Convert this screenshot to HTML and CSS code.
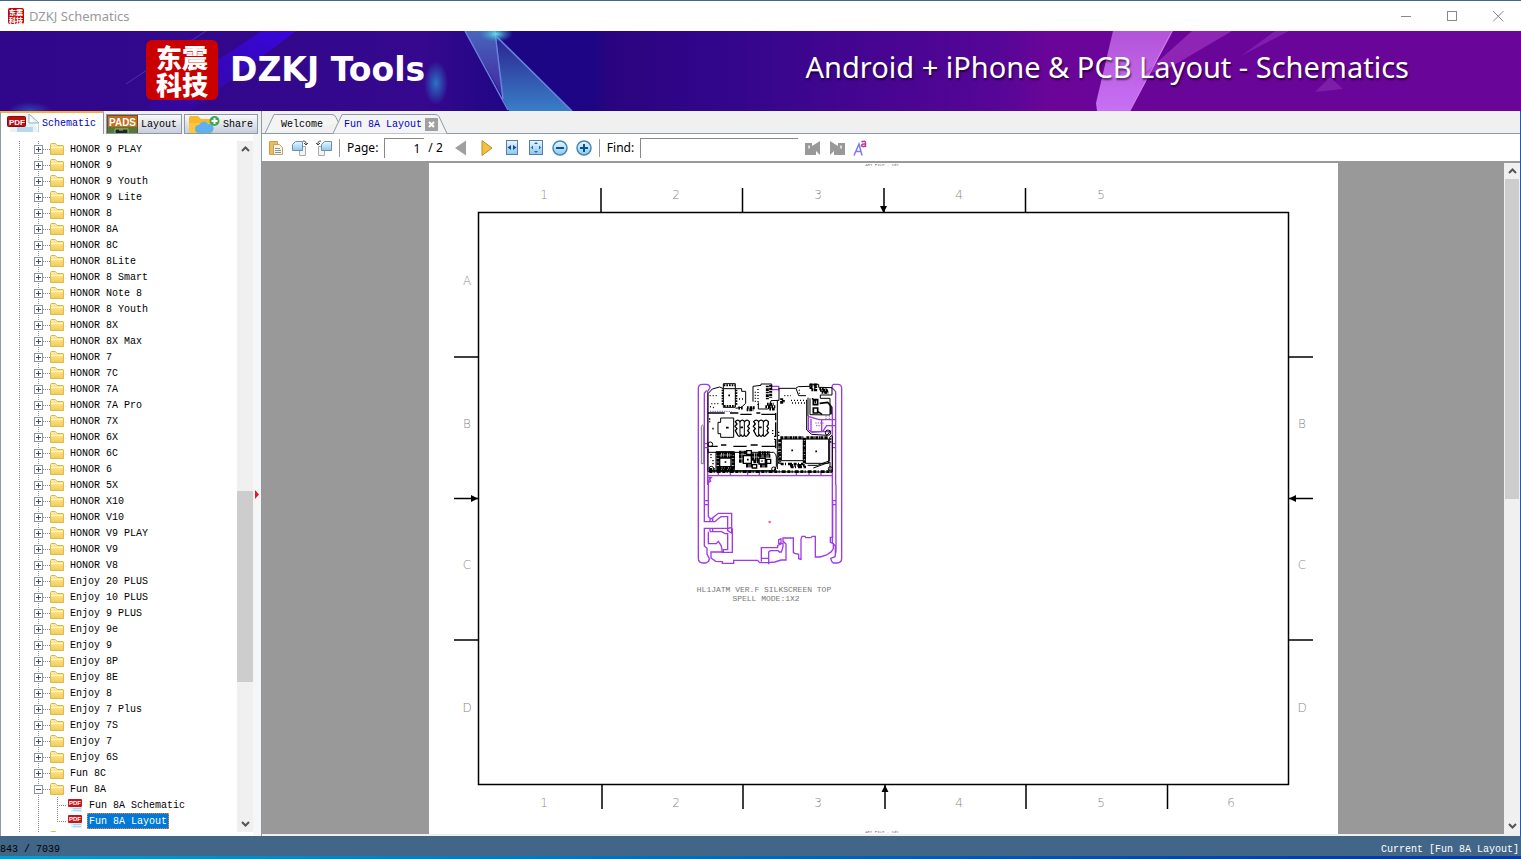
FILE: index.html
```html
<!DOCTYPE html>
<html lang="en">
<head>
    <meta charset="UTF-8">
    <meta name="viewport" content="width=device-width, initial-scale=1.0">
    <title>DZKJ Schematics</title>
    <link rel="stylesheet" href="styles.css">
</head>
<body>
    <!-- shared icons -->
    <svg class="sprite" aria-hidden="true">
        <defs>
            <linearGradient id="gold" x1="0" y1="0" x2="0" y2="1">
                <stop offset="0" stop-color="#fff0a8"/>
                <stop offset="1" stop-color="#f2cb55"/>
            </linearGradient>
            <linearGradient id="blue" x1="0" y1="0" x2="0" y2="1">
                <stop offset="0" stop-color="#e8f6ff"/>
                <stop offset="1" stop-color="#8cc8f0"/>
            </linearGradient>
        </defs>
        <symbol id="folder" viewBox="0 0 14 12">
            <path d="M.5 1.500q0-1 1-1h4l1.500 2h6q.5 0 .5.5v8.500H.5z" fill="url(#gold)" stroke="#dfb84e"/>
            <path d="M1 4.500h12" stroke="#fff6c4"/>
        </symbol>
        <symbol id="pdf" viewBox="0 0 16 15">
            <path d="M4 1h8l3 4v9H4z" fill="#dff0fb"/>
            <path d="M6 10.500h8M6 12.500h8" stroke="#a9d3ee"/>
            <rect x="1" y="1" width="14" height="8" rx="1" fill="#c4161c"/>
            <text x="2" y="7" class="tiny">PDF</text>
        </symbol>
        <symbol id="up" viewBox="0 0 9 6">
            <path d="M1 5l3.500-3.500L8 5" fill="none" stroke="#555" stroke-width="2"/>
        </symbol>
        <symbol id="down" viewBox="0 0 9 6">
            <path d="M1 1l3.500 3.500L8 1" fill="none" stroke="#555" stroke-width="2"/>
        </symbol>
    </svg>

    <header class="titlebar">
        <span class="seal small" aria-hidden="true"><b>东震</b><b>科技</b></span>
        <span class="title">DZKJ Schematics</span>
        <div class="window-buttons">
            <button aria-label="Minimize"><svg width="11" height="11"><path d="M0 5.500h10" stroke="#888"/></svg></button>
            <button aria-label="Maximize"><svg width="11" height="11"><rect x=".5" y=".5" width="9" height="9" fill="none" stroke="#888"/></svg></button>
            <button aria-label="Close"><svg width="11" height="11"><path d="M0 0l10.500 10.500M10.500 0L0 10.500" stroke="#888"/></svg></button>
        </div>
    </header>

    <div class="banner">
        <svg class="banner-art" viewBox="0 0 1521 80" preserveAspectRatio="none" aria-hidden="true">
            <defs>
                <linearGradient id="night">
                    <stop offset="0" stop-color="#30078a"/>
                    <stop offset=".28" stop-color="#35088e"/>
                    <stop offset=".34" stop-color="#1c0684"/>
                    <stop offset=".39" stop-color="#1d0585"/>
                    <stop offset=".4" stop-color="#2a047f"/>
                    <stop offset=".48" stop-color="#33068c"/>
                    <stop offset=".6" stop-color="#4b0593"/>
                    <stop offset=".66" stop-color="#570697"/>
                    <stop offset=".69" stop-color="#6b0599"/>
                    <stop offset="1" stop-color="#690599"/>
                </linearGradient>
                <linearGradient id="shard" x1="0" y1="0" x2="0" y2="1">
                    <stop offset="0" stop-color="#2b2290"/>
                    <stop offset="1" stop-color="#397fc6"/>
                </linearGradient>
                <linearGradient id="shard2" x1="0" y1="0" x2="0" y2="1">
                    <stop offset="0" stop-color="#4866bb"/>
                    <stop offset="1" stop-color="#4222a0"/>
                </linearGradient>
                <linearGradient id="pink" x1="0" y1="0" x2="0" y2="1">
                    <stop offset="0" stop-color="#b354d8"/>
                    <stop offset="1" stop-color="#c770f4"/>
                </linearGradient>
                <linearGradient id="streak" x1="1" y1="0" x2="0" y2="1">
                    <stop offset="0" stop-color="#3806dc"/>
                    <stop offset="1" stop-color="#3806dc" stop-opacity=".1"/>
                </linearGradient>
                <radialGradient id="glow">
                    <stop offset="0" stop-color="#2b72c4"/>
                    <stop offset="1" stop-color="#2b72c4" stop-opacity="0"/>
                </radialGradient>
                <radialGradient id="spark">
                    <stop offset="0" stop-color="#68e0ee"/>
                    <stop offset="1" stop-color="#309bc0" stop-opacity="0"/>
                </radialGradient>
            </defs>
            <rect width="1521" height="80" fill="url(#night)"/>
            <path d="M262 0h34L190 80h-50z" fill="url(#streak)"/>
            <path d="M206 0L126 53" stroke="#5a48b4" opacity=".7"/>
            <ellipse cx="436" cy="52" rx="12" ry="22" fill="url(#glow)"/>
            <ellipse cx="30" cy="80" rx="22" ry="9" fill="url(#glow)" opacity=".6"/>
            <path d="M465 0h30l9 68z" fill="url(#shard2)"/>
            <path d="M497 6l75 74h-63l-6-12z" fill="url(#shard)"/>
            <path d="M465 0l43 79M495 0l8 68M497 6l75 74" fill="none" stroke="#6b82e0" stroke-width="1.500"/>
            <ellipse cx="496" cy="3" rx="17" ry="8" fill="url(#spark)"/>
            <path d="M1113 0h60l-43 80h-33l-1-8z" fill="url(#pink)"/>
            <path d="M1192 0h40l-68 40-18 2-12 10z" fill="#a63bc6" opacity=".6"/>
            <path d="M1275 0h14l-48 25z" fill="#9237c0" opacity=".5"/>
            <path d="M1330 46l13 12-28 3z" fill="#8b2eb4" opacity=".6"/>
            <path d="M1172 0l-42 80" stroke="#ef97ee" opacity=".6"/>
        </svg>
        <div class="seal" aria-hidden="true"><b>东震</b><b>科技</b></div>
        <h1>DZKJ Tools</h1>
        <p>Android + iPhone &amp; PCB Layout - Schematics</p>
    </div>

    <main>
        <aside>
            <nav class="side-tabs">
                <button class="active"><svg width="35" height="18" viewBox="0 0 35 18">
                    <path d="M6 0h20l9 9v9H6z" fill="#e6f2f8"/>
                    <path d="M25 0l10 9v9M25 0v9h9" fill="#fff" stroke="#8fb2c4"/>
                    <path d="M13 13h16v5H13z" fill="#b5daee"/>
                    <rect x="3.500" y="2.500" width="18" height="10" rx="1" fill="#c30b12" stroke="#860c10"/>
                    <text x="5" y="11" class="pdf-text">PDF</text></svg>Schematic</button>
                <button><svg width="31" height="18" viewBox="0 0 31 18">
                    <rect x=".5" y=".5" width="30" height="18" fill="#c66a1c" stroke="#6e4b2e"/>
                    <text x="2" y="11" class="pads-text">PADS</text>
                    <path d="M1 12h29v6H1z" fill="#52793a"/>
                    <path d="M8 18v-4h13v4M12 15h4" fill="#222" stroke="#98c56a"/></svg>Layout</button>
                <button class="share"><svg width="31" height="18" viewBox="0 0 31 18">
                    <path d="M0 3q0-2 2-2h7l3 3h12v14H0z" fill="#f9b82b"/>
                    <path d="M0 8h24v10H0z" fill="#fdc63b"/>
                    <path d="M10 18a4 4 0 0 1 0-8 5 5 0 0 1 9-1 4 4 0 0 1 2 9z" fill="#5eb1ee"/>
                    <circle cx="25.500" cy="6" r="5" fill="#3da854"/>
                    <path d="M25.500 3v6M22.500 6h6" stroke="#fff" stroke-width="2"/></svg>Share</button>
            </nav>
            <div class="side-body">
                <ul class="tree" id="tree"></ul>
                <div class="scrollbar tree-scroll">
                    <button aria-label="Scroll up"><svg width="9" height="6"><use href="#up"/></svg></button>
                    <div class="track"><div class="thumb"></div></div>
                    <button aria-label="Scroll down"><svg width="9" height="6"><use href="#down"/></svg></button>
                </div>
                <div class="splitter"><svg width="5" height="9"><path d="M0 0l4 4.500L0 9z" fill="#e01b24"/></svg></div>
            </div>
        </aside>

        <section class="document">
            <nav class="doc-tabs">
                <svg class="tab-edges" width="188" height="20" aria-hidden="true">
                    <path d="M0 19.500h3L12 .500h58q3 0 4 3l3 6" fill="#f4f4f4" stroke="#8a9aa6"/>
                    <path d="M71 19.500L80 .500h93q3 0 4 2l8 17z" fill="#f4f4f4"/>
                    <path d="M71 19.500L80 .500h93q3 0 4 2l8 17" fill="none" stroke="#8a9aa6"/>
                </svg>
                <button>Welcome</button>
                <button class="active">Fun 8A Layout</button>
                <button class="close" aria-label="Close tab"><svg width="7" height="7"><path d="M1 1l5 5M6 1L1 6" stroke="#fff" stroke-width="2"/></svg></button>
            </nav>
            <div class="toolbar">
                <button aria-label="Open"><svg width="16" height="16">
                    <path d="M1.500 1.500h8v13h-8z" fill="#eebb5c" stroke="#cf9c46"/>
                    <path d="M5.500 4.500h6l3 3v7h-9z" fill="#fff3d8" stroke="#b9a274"/>
                    <path d="M7 8.500h5M7 10.500h6M7 12.500h6" stroke="#7795b5"/></svg></button>
                <button aria-label="Rotate left"><svg width="16" height="16">
                    <path d="M7.500 6.500h6v9h-6z" fill="#f3f3f3" stroke="#aaa"/>
                    <path d="M3.500 1.500h7v9h-10v-6z" fill="url(#blue)" stroke="#6b90b5"/>
                    <path d="M11 1q4 0 3 4M12 3l2 2 2-2" fill="none" stroke="#444"/></svg></button>
                <button aria-label="Rotate right"><svg width="16" height="16">
                    <path d="M2.500 6.500h6v9h-6z" fill="#f3f3f3" stroke="#aaa"/>
                    <path d="M8.500 1.500h7v9h-10v-6z" fill="url(#blue)" stroke="#6b90b5"/>
                    <path d="M5 1q-4 0-3 4M4 3L2 5 0 3" fill="none" stroke="#444"/></svg></button>
                <span class="divider"></span>
                <label for="page">Page:</label>
                <input type="text" id="page" value="1">
                <span class="total">/ 2</span>
                <button class="step" aria-label="Previous page"><svg width="12" height="16"><path d="M11 .500v15L0 8z" fill="#a0a0a0"/></svg></button>
                <button class="step" aria-label="Next page"><svg width="12" height="16"><path d="M1 .500v15L11 8z" fill="#f3c13c" stroke="#bd8b2c"/></svg></button>
                <button aria-label="Fit width"><svg width="16" height="16">
                    <rect x="2.500" y=".500" width="11" height="14" fill="url(#blue)" stroke="#587ba8"/>
                    <path d="M7 5v5L3.500 7.500zM9 5v5l3.500-2.500z" fill="#134f86"/></svg></button>
                <button aria-label="Fit page"><svg width="16" height="16">
                    <rect x="1.500" y=".500" width="13" height="14" fill="url(#blue)" stroke="#587ba8"/>
                    <path d="M8 2l2 2H6zM8 13l2-2H6zM3 7.500l2-2v4zM13 7.500l-2-2v4z" fill="#27639b"/></svg></button>
                <button aria-label="Zoom out"><svg width="16" height="16">
                    <circle cx="8" cy="8" r="7" fill="url(#blue)" stroke="#4586b4" stroke-width="1.500"/>
                    <path d="M4 8h8" stroke="#0b5290" stroke-width="2"/></svg></button>
                <button aria-label="Zoom in"><svg width="16" height="16">
                    <circle cx="8" cy="8" r="7" fill="url(#blue)" stroke="#4586b4" stroke-width="1.500"/>
                    <path d="M4 8h8M8 4v8" stroke="#0b5290" stroke-width="2"/></svg></button>
                <span class="divider"></span>
                <label for="find">Find:</label>
                <input type="text" id="find">
                <button aria-label="Find previous"><svg width="16" height="16">
                    <path d="M0 3h7v3l8-5v14l-4-4v4H0z" fill="#999"/><path d="M3 5.500h2v3H3z" fill="#ddd"/></svg></button>
                <button aria-label="Find next"><svg width="16" height="16">
                    <path d="M16 3H9v3L1 1v14l4-4v4h11z" fill="#999"/><path d="M11 5.500h2v3h-2z" fill="#ddd"/></svg></button>
                <button aria-label="Match case"><svg width="16" height="16">
                    <path d="M1 15.500L6 4l3 11.500M2.500 11.500h6" fill="none" stroke="#7e79ee" stroke-width="1.500"/>
                    <path d="M8.500 2q4-2 4 1v4M12.500 4q-4-.500-4 2 2 1.500 4-.500" fill="none" stroke="#b63d9d" stroke-width="1.500"/></svg></button>
            </div>
            <div class="viewer">
                <div class="canvas">
                    <svg class="sheet" viewBox="0 1 909 671" role="img" aria-label="HL1JATM board layout">
                        <!-- sheet frame and zone marks -->
                        <g fill="none" stroke="#000" stroke-width="1.500">
                            <path d="M49.500 50.500h810v572h-810z"/>
                            <path d="M172 26v24M313.500 26v24M455 26v24M596.500 26v24"/>
                            <path d="M173 623v24M314 623v24M456 623v24M597 623v24M738.500 623v24"/>
                            <path d="M25 195h24M25 336.500h24M25 478h24M860 195h24M860 336.500h24M860 478h24"/>
                        </g>
                        <path d="M451 44h7l-3.500 7zM452.500 630h7l-3.500-7zM42 333v7l7-3.500zM867 333v7l-7-3.500z"/>
                        <g class="zone">
                            <text x="115" y="37">1</text><text x="247" y="37">2</text><text x="389" y="37">3</text><text x="530" y="37">4</text><text x="672" y="37">5</text>
                            <text x="115" y="645">1</text><text x="247" y="645">2</text><text x="389" y="645">3</text><text x="530" y="645">4</text><text x="672" y="645">5</text><text x="802" y="645">6</text>
                            <text x="38" y="123">A</text><text x="38" y="266">B</text><text x="38" y="407">C</text><text x="38" y="550">D</text>
                            <text x="873" y="266">B</text><text x="873" y="407">C</text><text x="873" y="550">D</text>
                        </g>
                        <text x="453" y="4" class="film">ART FILM - sdt</text>
                        <text x="453" y="671" class="film">ART FILM - sdt</text>

                        <!-- board carrier, upper half -->
                        <g transform="translate(261 213) scale(.33333)" fill="none" stroke="#a03ae8" stroke-width="4">
                            <path d="M25 330V40q0-12 12-12h14q9 2 9 10l-7 11v281M43 330V55l7-9"/>
                            <path d="M455 330V40q0-12-12-12h-13q-4 2-4 10l11 12v280M427 330V95"/>
                            <path d="M52 302h374M85 291v10M121 291v10M173 291v10M208 291v10M319 291v10M357 291v10M393 291v10"/>
                            <path d="M437 134h-50l-32-10v40l11 8 32-2 12-18h27M363 132v38h60M395 134v36M246 34h20v10h-20M43 206h10M43 218h10M427 206h10M427 218h10M60 306l-8 20"/>
                        </g>
                        <!-- board components -->
                        <g transform="translate(261 213) scale(.33333)" fill="none" stroke="#000" stroke-width="3">
                            <path d="M34 266V155q3-10 6 0v111z" stroke="#777"/>
                            <path d="M54 105V56l13-14 22-6 11 5V26h36v15h19v8h12v36l-13 12-17 3M189 80V34l24-3v-4h32v18M205 82v20h30l8-25 24-1V40h50l8-5 35-1V28h26v9l40 1v22h-35V70h29v50l-60-1V70M350 75v90l15 13 46 3 11-14"/>
                            <path d="M54 105v185l373 1V183M262 76v206M354 68v55M54 222v10h197q8 4 8 14v28l-8 13H57"/>
                            <path d="M54 114h50M120 114h25M151 118h34M199 114h12M214 118h43M55 214h28M93 210h16M130 214h40M182 210h21M215 214h42M257 114v22M257 142v44M257 192v28" stroke-width="4"/>
                            <path d="M92 129h39v58H92v-11h-8v-34h8zM274 192h66v65h-66zM346 192h70v73h-70zM100 41v56h36V41zM78 230v56h55v-56zM318 40l8 22h22"/>
                            <path d="M136 140q7-9 14 0 7-9 14 0 7-9 14 0v8l-5 6 5 6-5 7 5 6-5 7q-5 8-10 0-5 8-10 0-5 8-10 0l-7-13 5-6-6-7 6-7zM191 140q8-9 15 0 7-9 15 0 7-9 14 0v8l-4 6 4 6-4 7 4 6-7 7q-5 8-10 0-5 8-10 0-5 8-10 0l-7-13 5-6-6-7 6-7z" stroke-width="4"/>
                            <path d="M150 138v44M163 138v44M206 138v44M220 138v44"/>
                            <path d="M82 235h50M81 245h53M84 278h48M82 285h50" stroke-width="9" stroke-dasharray="11 2 5 1"/>
                            <path d="M84 232v50M130 232v50" stroke-width="10" stroke-dasharray="8 2"/>
                            <path d="M89 249h34v26H89zM160 242h24v23h-24zM207 250h19v17h-19zM170 227h14v11h-14zM187 269h13v10h-13zM230 253h12v12h-12z" fill="#fff" stroke-width="4"/>
                            <path d="M147 233h22M147 245h13M147 258h13M185 240h22M185 252h20M168 272h18M190 259h18M205 234h34M207 243h34M210 272h22" stroke-width="11" stroke-dasharray="8 2 4 1"/>
                            <path d="M269 193v73M343 188v77M271 188h69M349 188h66" stroke-width="9" stroke-dasharray="8 2 3 1"/>
                            <path d="M272 267h68M302 276h46M58 290h370M58 283h36M300 271h44" stroke-width="8" stroke-dasharray="9 4 3 6 12 5"/>
                            <path d="M101 31h34M102 93h34M98 44v48M139 44v46" stroke-width="6" stroke-dasharray="5 3"/>
                            <path d="M171 98h24M170 104h20M226 95h30M231 88h20M238 102h18M145 99h13M232 32v42M242 30v38M275 70v17M280 75v9M390 46h22M395 52h20M388 41h13M363 30h14v14h-14z" stroke-width="9" stroke-dasharray="5 3 8 2"/>
                            <path d="M204 42v50M196 50v30M303 76h48M306 84h44M59 62h22M64 86h24M147 72h18M283 62h20M328 44v17M60 95l15 4" stroke-width="4" stroke-dasharray="3 6"/>
                            <path d="M370 74h13v15h-13zM370 99h13v15h-13zM389 85l24-3 10 12v24M366 70l12 10M384 110l12 8" stroke-width="5"/>
                            <path d="M408 121v11M418 121v11M60 109h65M376 144h25M378 152h22" stroke="#8a5aba" stroke-dasharray="4 3"/>
                            <circle cx="414" cy="173" r="8"/><circle cx="61" cy="208" r="7"/><circle cx="251" cy="282" r="6"/><circle cx="64" cy="281" r="7"/><circle cx="421" cy="281" r="6"/><circle cx="407" cy="48" r="6"/>
                            <path d="M353 271h30l36-14v-70l7-6M370 279l50-18v24"/>
                            <path d="M67 161h4M108 158h8M151 157h8M207 157h8M304 226h5M376 229h5M115 61h5M104 261h5M171 254h5M214 258h4M374 83h4" stroke-width="5"/>
                            <path d="M63 237v12M69 255v18M248 165v12M254 182v20M59 130v12M266 170v14M266 225v42M422 190v18" stroke-width="4" stroke-dasharray="4 5"/>
                        </g>
                        <!-- board carrier, lower half -->
                        <g transform="translate(261 308) scale(.33333)" fill="none" stroke="#a03ae8" stroke-width="4">
                            <path d="M25 44v221q0 14 14 14h9q10-4 10-13l-7-14V235l-8-7v-53h72q8-4 12 2v70H96v-9l-3-12-8-12-6 7H55v-36"/>
                            <path d="M52 22h12l-5 7 3 4-7 5v102q8 12 16 1l14-11h40v59l-12-7V140H93l-10 8-8 7H43V44M60 145v10M68 145v10M60 175v10M68 175v10M43 92h10M43 104h10M60 185h35l10 6h8v48h-13v7H63v18l14 10 20 1v5h34v-9h72l6 7h26l20-2 18-6h15v-48l-9-8v-10h31v43l4 3 12 3v13l7 2v-61l3-8h9l2 4h16l4-4h9v62h14l20-6 14-10 6-9v-15l-9-4v-15h7V95M214 275v-42h49v-7l10-4v-16l-7 3v11h13v11l-5 15h-6l-3-4h-24l-5 4v37M215 265h20"/>
                            <path d="M455 44v221q0 14-14 14h-11q-6-4-8-14l13-5 3-17V44M427 44v174l9 10v31M427 92h10M427 104h10"/>
                            <circle cx="239" cy="156" r="2" stroke="#ee6a86"/>
                        </g>
                        <text x="335" y="430" class="caption">HL1JATM VER.F SILKSCREEN TOP</text>
                        <text x="337" y="439" class="caption">SPELL MODE:1X2</text>
                    </svg>
                </div>
                <div class="scrollbar page-scroll">
                    <button aria-label="Scroll up"><svg width="9" height="6"><use href="#up"/></svg></button>
                    <div class="track"><div class="thumb"></div></div>
                    <button aria-label="Scroll down"><svg width="9" height="6"><use href="#down"/></svg></button>
                </div>
            </div>
        </section>
    </main>

    <footer>
        <span>843 / 7039</span>
        <span class="current">Current [Fun 8A Layout]</span>
    </footer>

    <script>
        const folders = [
            'HONOR 9 PLAY', 'HONOR 9', 'HONOR 9 Youth', 'HONOR 9 Lite', 'HONOR 8', 'HONOR 8A', 'HONOR 8C',
            'HONOR 8Lite', 'HONOR 8 Smart', 'HONOR Note 8', 'HONOR 8 Youth', 'HONOR 8X', 'HONOR 8X Max',
            'HONOR 7', 'HONOR 7C', 'HONOR 7A', 'HONOR 7A Pro', 'HONOR 7X', 'HONOR 6X', 'HONOR 6C', 'HONOR 6',
            'HONOR 5X', 'HONOR X10', 'HONOR V10', 'HONOR V9 PLAY', 'HONOR V9', 'HONOR V8', 'Enjoy 20 PLUS',
            'Enjoy 10 PLUS', 'Enjoy 9 PLUS', 'Enjoy 9e', 'Enjoy 9', 'Enjoy 8P', 'Enjoy 8E', 'Enjoy 8',
            'Enjoy 7 Plus', 'Enjoy 7S', 'Enjoy 7', 'Enjoy 6S', 'Fun 8C', 'Fun 8A'
        ];
        const files = ['Fun 8A Schematic', 'Fun 8A Layout'];
        const tree = document.getElementById('tree');

        function folderRow(name) {
            const open = name === 'Fun 8A';
            return `<li class="folder">
                <button class="toggle" aria-label="Toggle ${name}" aria-expanded="${open}">
                    <svg width="9" height="9"><rect x=".5" y=".5" width="8" height="8" fill="#fff" stroke="#8a94a3"/>
                    <path d="M2 4.500h5${open ? '' : 'M4.500 2v5'}" stroke="#444f70"/></svg>
                </button>
                <i></i><svg width="14" height="12"><use href="#folder"/></svg>
                <span>${name}</span></li>`;
        }

        function fileRow(name) {
            const selected = name === 'Fun 8A Layout' ? ' selected' : '';
            return `<li class="file${selected}"><i></i><svg width="16" height="15"><use href="#pdf"/></svg>
                <span>${name}</span></li>`;
        }

        tree.innerHTML = folders.map(folderRow).join('') + files.map(fileRow).join('') +
            '<li class="folder next"><i></i><svg width="14" height="12"><use href="#folder"/></svg></li>';
    </script>
</body>
</html>
```
FILE: styles.css
```css
:root {
    --mono: "Liberation Mono", monospace;
    --sans: "Noto Sans", "Open Sans", sans-serif;
    --line: #8a9aa6;
    --panel: #f0f0f0;
    --dots: repeating-linear-gradient(#888 0 1px, transparent 1px 2px);
    --dots-x: repeating-linear-gradient(90deg, #888 0 1px, transparent 1px 2px);
}

* {
    box-sizing: border-box;
}

body {
    margin: 0;
    height: 100vh;
    display: flex;
    flex-direction: column;
    overflow: hidden;
    border-top: 1px solid #46678a;
    background: var(--panel);
    color: #000;
    font: 10px/16px var(--mono);
}

button {
    display: flex;
    align-items: center;
    justify-content: center;
    padding: 0;
    border: 0;
    background: none;
    color: inherit;
    font: inherit;
}

svg {
    flex: none;
}

.sprite {
    position: absolute;
    width: 0;
    height: 0;
}

.tiny {
    fill: #fff;
    font: bold 6px "Liberation Sans", sans-serif;
}

.pdf-text {
    fill: #fff;
    font: bold 8px "Liberation Sans", sans-serif;
}

.pads-text {
    fill: #fff;
    font: bold 10px "Liberation Sans", sans-serif;
}

/* title bar */
.titlebar {
    flex: none;
    height: 30px;
    display: flex;
    align-items: center;
    padding-left: 8px;
    background: #fff;
}

.title {
    margin-left: 5px;
    color: #999;
    font: 13px/16px var(--sans);
}

.window-buttons {
    display: flex;
    margin-left: auto;
}

.window-buttons button {
    width: 46px;
    height: 30px;
}

.seal {
    width: 72px;
    height: 60px;
    display: flex;
    flex-direction: column;
    align-items: center;
    justify-content: center;
    border-radius: 6px;
    background: #ca0000;
    color: #fff;
    font: bold 26px/27px "Noto Sans CJK SC", sans-serif;
}

.seal.small {
    width: 16px;
    height: 16px;
    border-radius: 2px;
    font-size: 7px;
    line-height: 8px;
}

/* banner */
.banner {
    position: relative;
    flex: none;
    height: 80px;
    display: flex;
    align-items: center;
    padding: 0 112px 2px 146px;
    color: #fff;
}

.banner-art {
    position: absolute;
    inset: 0;
    width: 100%;
    height: 100%;
}

.banner .seal,
.banner h1,
.banner p {
    position: relative;
    margin: 0;
}

.banner h1 {
    margin-left: 12px;
    font: bold 33px/40px "DejaVu Sans", sans-serif;
}

.banner p {
    margin-left: auto;
    padding-bottom: 6px;
    font: 29px/40px var(--sans);
    text-shadow: 1px 2px 2px rgba(0, 0, 0, 0.6);
}

main {
    flex: 1;
    min-height: 0;
    display: flex;
}

/* left panel */
aside {
    flex: none;
    width: 261px;
    display: flex;
    flex-direction: column;
}

.side-tabs {
    flex: none;
    height: 23px;
    display: flex;
    align-items: flex-end;
    gap: 2px;
}

.side-tabs button {
    height: 20px;
    align-items: flex-end;
    gap: 3px;
    padding: 0 4px 0 0;
    border: 1px solid var(--line);
    background: linear-gradient(#fafafa, #c8cedf);
}

.side-tabs button.active {
    height: 23px;
    padding: 0 7px 2px 3px;
    border-top: 2px solid #f7ae3c;
    border-bottom: 0;
    background: #fff;
    color: #0000c8;
}

.side-tabs button.share {
    padding-left: 4px;
}

.side-body {
    flex: 1;
    min-height: 0;
    display: flex;
    border-left: 1px solid var(--line);
    background: #fff;
}

.tree {
    flex: 1;
    margin: 7px 0 4px;
    padding: 0;
    list-style: none;
    overflow: hidden;
    background: var(--dots) 18px 0 / 1px 100% no-repeat, var(--dots) 37px 0 / 1px 100% no-repeat;
}

.tree li {
    height: 16px;
    display: flex;
    align-items: center;
    white-space: nowrap;
}

.tree i {
    height: 1px;
    background: var(--dots-x);
}

.folder {
    padding-left: 33px;
}

.folder i {
    width: 7px;
}

.folder span {
    margin-left: 6px;
    padding-top: 2px;
    line-height: 14px;
}

.folder.next {
    padding-left: 42px;
}

.file {
    padding-left: 56px;
    background: var(--dots) 56px 0 / 1px 100% no-repeat;
}

.file.selected {
    background-size: 1px 50%;
}

.file i {
    width: 10px;
}

.file span {
    margin-left: 4px;
    padding: 2px 1px 0;
    line-height: 12px;
    border: 1px solid transparent;
}

.file.selected span {
    border: 1px dotted #ff8728;
    background: #0078d7;
    color: #fff;
}

.scrollbar {
    flex: none;
    width: 16px;
    display: flex;
    flex-direction: column;
    background: var(--panel);
}

.scrollbar button {
    height: 16px;
}

.track {
    flex: 1;
}

.thumb {
    background: #cdcdcd;
}

.tree-scroll {
    margin: 7px 0 4px;
}

.tree-scroll .thumb {
    height: 29%;
    margin-top: 334px;
}

.splitter {
    width: 8px;
    display: flex;
    align-items: center;
    padding: 18px 0 0 2px;
    background: #f6f6f6;
}

/* document area */
.document {
    flex: 1;
    min-width: 0;
    display: flex;
    flex-direction: column;
    border-left: 1px solid var(--line);
    border-right: 1px solid #2c55a5;
}

.doc-tabs {
    position: relative;
    flex: none;
    height: 23px;
    display: flex;
    align-items: center;
    padding: 5px 0 0 19px;
    border-bottom: 1px solid var(--line);
}

.tab-edges {
    position: absolute;
    left: 0;
    bottom: -1px;
}

.doc-tabs button {
    position: relative;
}

.doc-tabs .active {
    margin-left: 21px;
    color: #0000c8;
}

.doc-tabs .close {
    width: 13px;
    height: 13px;
    margin-left: 3px;
    background: #a0a0a0;
}

.toolbar {
    flex: none;
    height: 29px;
    display: flex;
    align-items: center;
    gap: 8px;
    padding: 1px 0 0 6px;
    border-bottom: 2px solid #999;
    background: #fff;
    font: 12px/16px var(--sans);
}

.divider {
    width: 1px;
    height: 18px;
    margin: 0 -1px;
    background: #999;
}

.toolbar input {
    height: 20px;
    margin: 0 -1px 0 -2px;
    padding: 0 4px;
    border: solid #888;
    border-width: 1px 0 0 1px;
    background: #fff;
    font: inherit;
    outline: 0;
}

#page {
    width: 40px;
    text-align: right;
}

#find {
    width: 158px;
}

.total {
    margin: 0 1px 0 -3px;
}

.step {
    width: 18px;
}

.viewer {
    flex: 1;
    min-height: 0;
    display: flex;
    padding-bottom: 2px;
}

.canvas {
    flex: 1;
    min-width: 0;
    display: flex;
    justify-content: center;
    background: #999;
}

.sheet {
    height: 100%;
    aspect-ratio: 909 / 671;
    background: #fff;
}

.zone {
    fill: #888;
    font: 12px "DejaVu Sans", sans-serif;
    font-weight: 200;
    text-anchor: middle;
}

.film {
    fill: #777;
    font: 4px var(--mono);
    text-anchor: middle;
}

.caption {
    fill: #777;
    font: 8px var(--mono);
    text-anchor: middle;
}

.page-scroll .thumb {
    width: 14px;
    height: 50%;
    margin-left: 1px;
}

/* status bar */
footer {
    flex: none;
    height: 23px;
    display: flex;
    justify-content: space-between;
    align-items: flex-end;
    padding-right: 2px;
    border-bottom: 3px solid;
    border-image: linear-gradient(90deg, #00a0d0, #063aa0 90%) 1;
    background: #426688;
    line-height: 12px;
}

.current {
    color: #fff;
}
```
